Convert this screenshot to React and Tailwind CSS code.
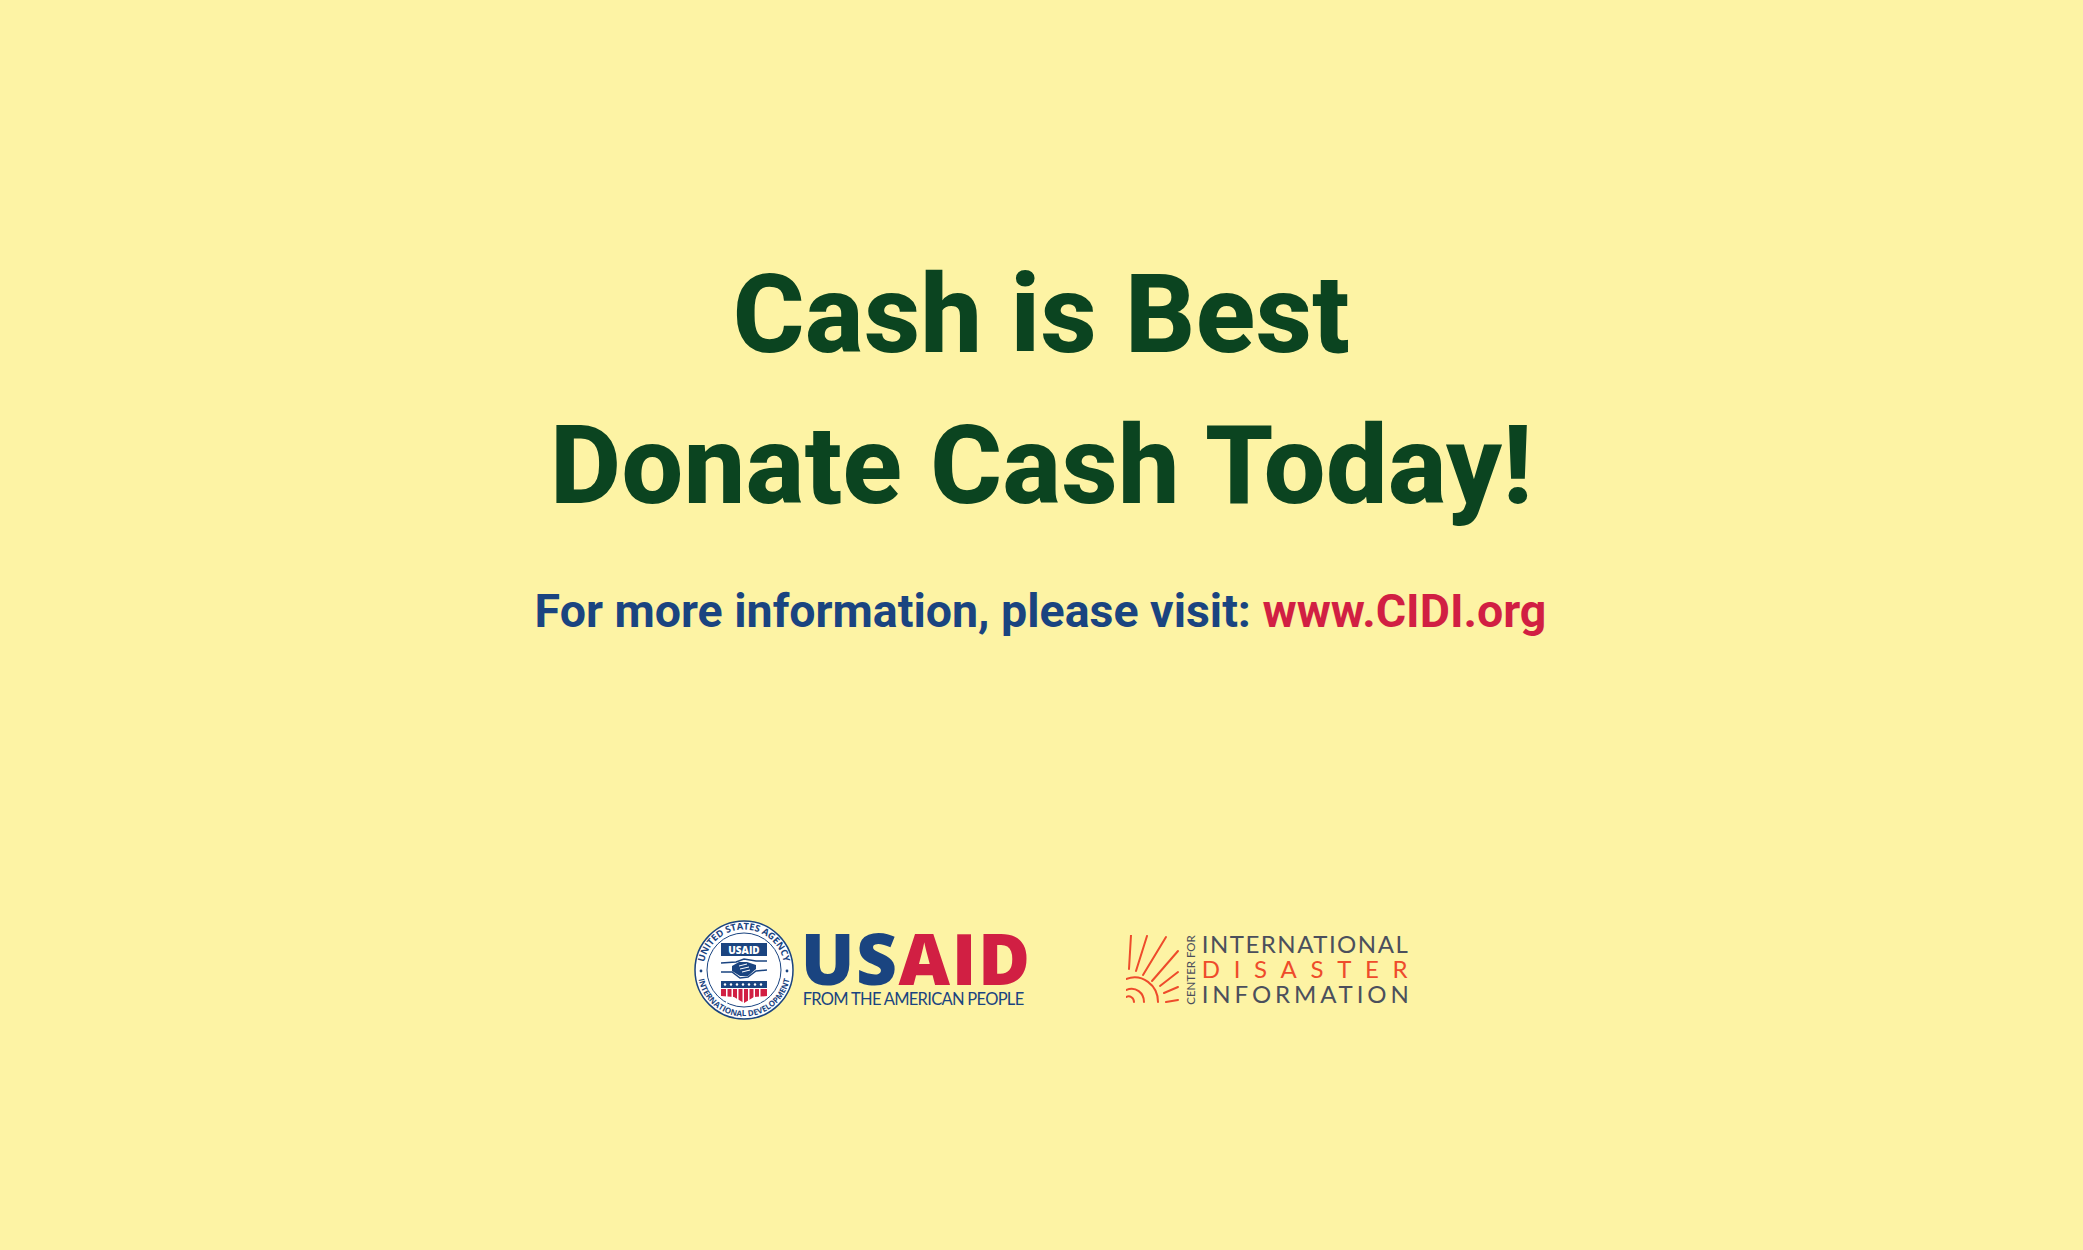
import React from 'react';

function UsaidSeal() {
  return (
    <svg width="100" height="100" viewBox="0 0 100 100" className="shrink-0">
      <defs>
        <path id="sealTop" d="M 9.5 50 A 40.5 40.5 0 0 1 90.5 50" />
        <path id="sealBottom" d="M 3.5 50 A 46.5 46.5 0 0 0 96.5 50" />
      </defs>
      <circle cx="50" cy="50" r="49" fill="#fff" stroke="#1a4480" strokeWidth="1.5" />
      <circle cx="50" cy="50" r="37" fill="#fff" stroke="#1a4480" strokeWidth="1" />
      <text fill="#1a4480" fontFamily="Open Sans, sans-serif" fontWeight="700" fontSize="9.4">
        <textPath href="#sealTop" startOffset="50%" textAnchor="middle">UNITED STATES AGENCY</textPath>
      </text>
      <text fill="#1a4480" fontFamily="Open Sans, sans-serif" fontWeight="700" fontSize="8">
        <textPath href="#sealBottom" startOffset="50%" textAnchor="middle">INTERNATIONAL DEVELOPMENT</textPath>
      </text>
      <circle cx="7" cy="51" r="1.4" fill="#1a4480" />
      <circle cx="93" cy="51" r="1.4" fill="#1a4480" />
      <rect x="27" y="23" width="46" height="13" fill="#1a4480" />
      <text x="50" y="33.5" textAnchor="middle" fill="#fff" fontFamily="Open Sans, sans-serif" fontWeight="800" fontSize="10">USAID</text>
      {/* handshake */}
      <path d="M27 43 L42 42 L50 39 L62 41 L73 41 M27 52 L38 52 L46 58 L54 57 L62 51 L73 50" fill="none" stroke="#1a4480" strokeWidth="1.5" />
      <path d="M38 46 L45 42 L53 42 L62 45 L62 49 L54 56 L46 56 L38 51 Z" fill="#1a4480" />
      <path d="M45 46 L53 44 M46 49 L55 47 M48 52 L56 50" stroke="#fff" strokeWidth="1" />
      <rect x="27" y="61" width="46" height="7" fill="#1a4480" />
      {[31, 37, 43, 49, 55, 61, 67].map((x) => (
        <circle key={x} cx={x} cy="64.5" r="1.2" fill="#fff" />
      ))}
      <path d="M27 69 H73 V76 L60 77 L50 83 L40 77 L27 76 Z" fill="#d11f43" />
      {[32, 37.5, 43, 48.5, 54, 59.5, 65].map((x) => (
        <rect key={x} x={x} y="69" width="1.5" height="14" fill="#fff" />
      ))}
    </svg>
  );
}

function SunMark() {
  return (
    <svg width="54" height="70" viewBox="0 0 54 70" className="shrink-0" fill="none" stroke="#ee4b2b" strokeWidth="2" strokeLinecap="round">
      <path d="M5 0 L3 34" />
      <path d="M21 1 L10 36" />
      <path d="M40 2 L17 40" />
      <path d="M52 16 L26 46" />
      <path d="M52 37 L34 51" />
      <path d="M52 52 L38 58" />
      <path d="M52 65 L40 67" />
      <path d="M0 44 C 16 38 32 50 32 67" />
      <path d="M0 55 C 10 51 18 58 18 67" />
      <path d="M0 62 C 4 60 8 63 8 67" />
    </svg>
  );
}

function UsaidLogo() {
  return (
    <div className="flex items-center gap-[7px]">
      <UsaidSeal />
      <div className="flex flex-col">
        <div className="text-[71px] leading-[50px] font-extrabold tracking-[1.6px] h-[50px] whitespace-nowrap" style={{ fontFamily: '"Open Sans", sans-serif' }}>
          <span className="text-[#1a4480]">US</span>
          <span className="text-[#d11f43]">AID</span>
        </div>
        <div className="mt-[7px] ml-[2px] text-[16.5px] leading-[18px] tracking-[-0.7px] text-[#1a4480] whitespace-nowrap" style={{ fontFamily: 'Lato, sans-serif' }}>
          FROM THE AMERICAN PEOPLE
        </div>
      </div>
    </div>
  );
}

function CidiLogo() {
  return (
    <div className="flex items-center gap-[5px]" style={{ fontFamily: 'Lato, sans-serif' }}>
      <SunMark />
      <div className="w-[12px] h-[70px] flex items-center justify-center">
        <span className="-rotate-90 whitespace-nowrap text-[11.5px] leading-[12px] text-[#4b4f5c]">CENTER FOR</span>
      </div>
      <div className="mb-[4px] flex flex-col text-[24px] leading-[25px] whitespace-nowrap">
        <span className="text-[#4b4f5c] tracking-[1.5px]">INTERNATIONAL</span>
        <span className="text-[#ee4b2b] tracking-[13.7px]">DISASTER</span>
        <span className="text-[#4b4f5c] tracking-[3.9px]">INFORMATION</span>
      </div>
    </div>
  );
}

export default function App() {
  return (
    <div className="min-h-[1250px] bg-[#fdf3a4] flex flex-col items-center pt-[239px]" style={{ fontFamily: 'Roboto, sans-serif' }}>
      <h1 className="text-[109.5px] leading-[151px] font-extrabold text-[#0b4420] text-center tracking-[0.5px]">
        Cash is Best
        <br />
        Donate Cash Today!
      </h1>
      <p className="mt-[40px] mr-[2px] text-[46.5px] leading-[60px] font-bold text-[#1a4480]">
        For more information, please visit: <span className="text-[#d11f43]">www.CIDI.org</span>
      </p>
      <div className="mt-[279px] ml-[32px] flex items-center gap-[94px]">
        <UsaidLogo />
        <CidiLogo />
      </div>
    </div>
  );
}
